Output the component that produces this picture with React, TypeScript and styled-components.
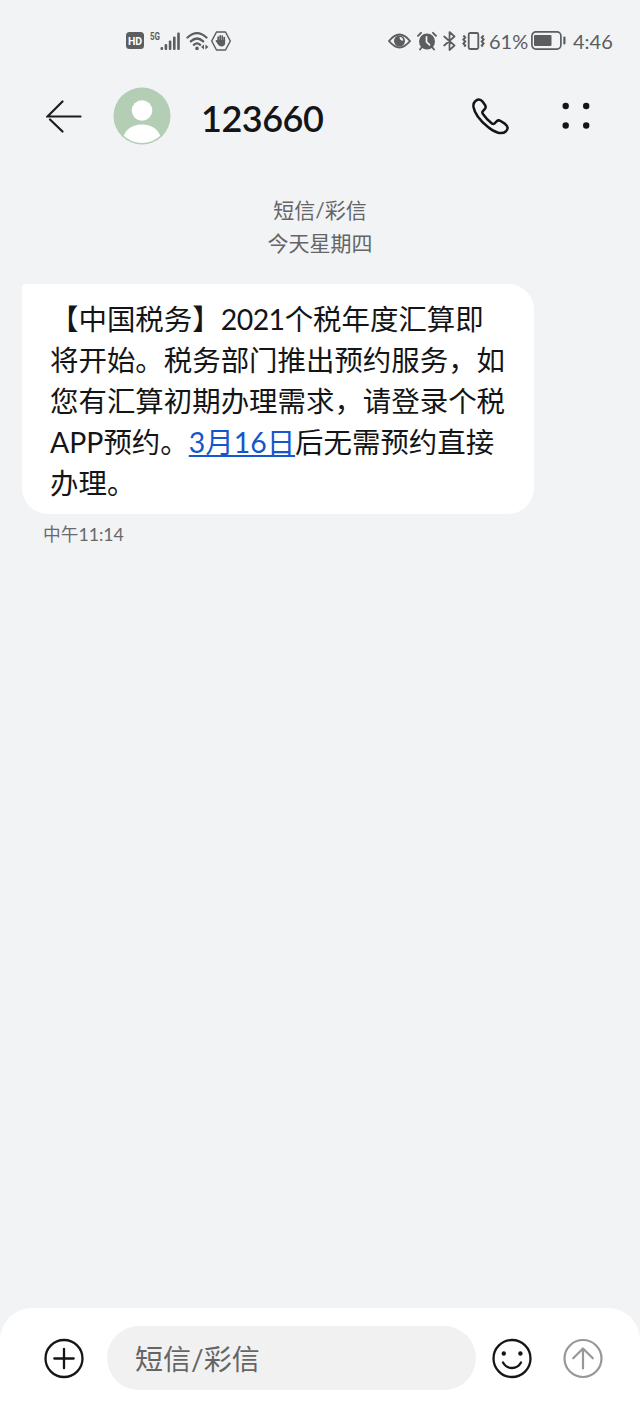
import React from "react";
import styled, { createGlobalStyle } from "styled-components";

const GlobalStyle = createGlobalStyle`
  * { box-sizing: border-box; }
  body {
    margin: 0;
    background: #f2f3f5;
    font-family: "Lato", "Noto Sans CJK SC", sans-serif;
    color: #141516;
  }
`;

const Screen = styled.div`
  width: 640px;
  height: 1408px;
  display: flex;
  flex-direction: column;
  overflow: hidden;
  background: #f2f3f5;
`;

const StatusBar = styled.div`
  height: 79px;
  padding: 2px 28px 0 126px;
  display: flex;
  align-items: center;
  justify-content: space-between;
  color: #5c5d5f;
`;

const StatusGroup = styled.div`
  display: flex;
  align-items: center;
`;

const StatusIcon = styled.svg<{ $gap?: number }>`
  display: block;
  flex: none;
  margin-right: ${(p) => p.$gap ?? 0}px;
`;

const StatusText = styled.span<{ $width: number; $gap?: number }>`
  width: ${(p) => p.$width}px;
  margin-right: ${(p) => p.$gap ?? 0}px;
  font-size: 20px;
  line-height: 24px;
  white-space: nowrap;
`;

const Header = styled.header`
  height: 74px;
  padding: 0 48px 0 46px;
  display: flex;
  align-items: center;
`;

const Icon = styled.svg`
  display: block;
  flex: none;
`;

const Avatar = styled.div`
  width: 58px;
  height: 58px;
  margin: 0 30px 0 31px;
  flex: none;
`;

const Title = styled.h1`
  margin: 3px 0 0;
  flex: 1;
  font-size: 36px;
  line-height: 44px;
  font-weight: 600;
  letter-spacing: -0.5px;
`;

const Actions = styled.div`
  display: flex;
  align-items: center;
  gap: 53px;
`;

const DateBlock = styled.div`
  margin-top: 40px;
  text-align: center;
  font-size: 21px;
  line-height: 33px;
  color: #646567;
`;

const Message = styled.section`
  margin: 25px 0 0 22px;
  width: 512px;
`;

const Bubble = styled.div`
  height: 230px;
  padding: 15px 0 0 28px;
  border-radius: 4px 26px 26px 26px;
  background: #fff;
  font-size: 28.45px;
  line-height: 41px;
`;

const Line = styled.div`
  white-space: nowrap;
`;

const Latin = styled.span`
  letter-spacing: -0.5px;
`;

const DateLink = styled.a`
  color: #1456cc;
  text-decoration: underline;
  text-decoration-thickness: 1.5px;
  text-underline-offset: 2px;
`;

const Time = styled.div`
  margin: 8px 0 0 21px;
  font-size: 17.7px;
  line-height: 26px;
  color: #69696b;
`;

const Composer = styled.footer`
  margin-top: auto;
  height: 100px;
  padding: 0 36px 0 43px;
  display: flex;
  align-items: center;
  border-radius: 32px 32px 0 0;
  background: #fff;
`;

const Field = styled.div`
  width: 369px;
  height: 64px;
  margin: 0 16px 0 23px;
  padding-left: 28px;
  border-radius: 32px;
  background: #f1f1f1;
  font-size: 28px;
  line-height: 67px;
  color: #656565;
`;

const SendGap = styled.div`
  margin-left: 30px;
`;

function LeftStatus() {
  return (
    <StatusGroup>
      <StatusIcon width="18" height="17" viewBox="0 0 18 17" $gap={6}>
        <rect width="18" height="17" rx="3.5" fill="#5c5d5f" />
        <text x="9" y="12.6" fontSize="10.5" fontWeight="700" fontFamily="Roboto, sans-serif" textAnchor="middle" fill="#fff">HD</text>
      </StatusIcon>
      <StatusIcon width="31" height="20" viewBox="0 0 31 20" $gap={5}>
        <text x="0" y="9" fontSize="10.5" fontWeight="700" textLength="10" lengthAdjust="spacingAndGlyphs" fontFamily="Roboto, sans-serif" fill="#5c5d5f">5G</text>
        <g fill="#5c5d5f">
          <rect x="10.5" y="16" width="2.6" height="3" rx="1" />
          <rect x="14.6" y="13" width="2.6" height="6" rx="1" />
          <rect x="18.8" y="9.5" width="2.6" height="9.5" rx="1" />
          <rect x="23" y="5.5" width="2.6" height="13.5" rx="1" />
          <rect x="27.2" y="1.5" width="2.6" height="17.5" rx="1" />
        </g>
      </StatusIcon>
      <StatusIcon width="23" height="20" viewBox="0 0 23 20" $gap={2}>
        <g fill="none" stroke="#5c5d5f" strokeWidth="2.2" strokeLinecap="round">
          <path d="M1.500 6.500Q11-2.200 20.500 6.500" />
          <path d="M4.800 10.400Q11 4.600 17.200 10.400" />
          <path d="M7.800 13.800Q11 11 14.200 13.800" />
        </g>
        <circle cx="11" cy="17.400" r="1.800" fill="#5c5d5f" />
        <path d="M18 13.500v5l-3-2.500zM19.400 13.500v5l3-2.500z" fill="#5c5d5f" />
      </StatusIcon>
      <StatusIcon width="20" height="20" viewBox="0 0 20 20">
        <path d="M5.500 1h9L19.300 10l-4.800 9h-9L.7 10z" fill="none" stroke="#5c5d5f" strokeWidth="1.500" strokeLinejoin="round" />
        <path d="M7.200 10V6.200M9.200 9V4.800M11.300 9V5.100M13.300 10V6.500M5.400 9.800l2.200 2.800" stroke="#5c5d5f" strokeWidth="1.700" strokeLinecap="round" fill="none" />
        <path d="M6.500 9h7.600v3.300q-.4 3.200-3.600 3.200-2.300 0-3.600-2.300z" fill="#5c5d5f" />
      </StatusIcon>
    </StatusGroup>
  );
}

function RightStatus() {
  return (
    <StatusGroup>
      <StatusIcon width="23" height="16" viewBox="0 0 23 16" $gap={6}>
        <path d="M1 8Q11.500-5 22 8 11.500 21 1 8z" fill="none" stroke="#5c5d5f" strokeWidth="1.900" />
        <circle cx="11.500" cy="8" r="5.500" fill="#5c5d5f" />
        <path d="M11.500 4.200q.2 3.300 3.600 3.500a3 3 0 0 0-3.600-3.500z" fill="#f2f3f5" />
      </StatusIcon>
      <StatusIcon width="20" height="20" viewBox="0 0 20 20" $gap={6}>
        <circle cx="10" cy="10.500" r="8" fill="#5c5d5f" />
        <path d="M1 4.800L4 1.800M19 4.800l-3-3M4.500 16.500l-1.500 2M15.500 16.500l1.500 2" stroke="#5c5d5f" strokeWidth="1.900" strokeLinecap="round" />
        <path d="M9.500 5.800v5l3 3" stroke="#f2f3f5" strokeWidth="1.700" strokeLinecap="round" fill="none" />
      </StatusIcon>
      <StatusIcon width="13" height="20" viewBox="0 0 13 20" $gap={6}>
        <path d="M1.200 5.500l10.300 9L6.500 19V1l5 4.500-10.300 9" fill="none" stroke="#5c5d5f" strokeWidth="1.700" strokeLinejoin="round" strokeLinecap="round" />
      </StatusIcon>
      <StatusIcon width="23" height="18" viewBox="0 0 23 18" $gap={4}>
        <rect x="6.700" y="1" width="9.600" height="16" rx="1.500" fill="none" stroke="#5c5d5f" strokeWidth="1.800" />
        <path d="M1.400 3.500l1.800 2-1.800 2 1.800 2-1.800 2 1.800 2-1 1.200M21.600 3.500l-1.800 2 1.800 2-1.800 2 1.800 2-1.800 2 1 1.200" fill="none" stroke="#5c5d5f" strokeWidth="2" />
      </StatusIcon>
      <StatusText $width={38} $gap={4}>61%</StatusText>
      <StatusIcon width="35" height="19" viewBox="0 0 35 19" $gap={7}>
        <rect x=".900" y=".900" width="29" height="17.200" rx="4" fill="none" stroke="#5c5d5f" strokeWidth="1.700" />
        <rect x="3" y="4" width="17.500" height="11" rx="1" fill="#5c5d5f" />
        <rect x="32.300" y="5.500" width="2.200" height="8" rx="1" fill="#5c5d5f" />
      </StatusIcon>
      <StatusText $width={39}>4:46</StatusText>
    </StatusGroup>
  );
}

export default function App() {
  return (
    <Screen>
      <GlobalStyle />
      <StatusBar>
        <LeftStatus />
        <RightStatus />
      </StatusBar>
      <Header>
        <Icon width="36" height="34" viewBox="0 0 36 34" fill="none" stroke="#1b1c1e" strokeWidth="2.200" strokeLinecap="round">
          <path d="M34.500 17.500H1.500L16.500 2.500M4 20.500l12.500 12" />
        </Icon>
        <Avatar>
          <svg width="58" height="58" viewBox="0 0 58 58">
            <clipPath id="face"><circle cx="29" cy="29" r="27" /></clipPath>
            <circle cx="29" cy="29" r="28.500" fill="#b4ceb6" />
            <circle cx="29" cy="23.500" r="10.300" fill="#fff" />
            <path clipPath="url(#face)" d="M9 58c0-13 8-20.500 20-20.500S49 45 49 58z" fill="#fff" />
          </svg>
        </Avatar>
        <Title>123660</Title>
        <Actions>
          <Icon width="37" height="37" viewBox="0 0 37 37" fill="none" stroke="#141516" strokeWidth="2.500" strokeLinejoin="round">
            <path d="M3 3.500C5.500.800 8.500 1 10.500 3.500L13 7q1.500 2.300-.3 4.200l-1.800 1.900q-1.100 1.300 0 2.800 3.800 5.400 9 9.600 1.400 1.100 2.700-.2l2-2q1.800-1.700 4-.3l4.500 2.900q4.500 3.600.9 7.300c-4 3.600-11 1.900-18.300-4.400C8 22.500 2.500 15 1.500 9Q1 5.500 3 3.500z" />
          </Icon>
          <Icon width="30" height="28" viewBox="0 0 30 28" fill="#141516">
            <circle cx="3.700" cy="4" r="3.200" />
            <circle cx="24.200" cy="4" r="3.200" />
            <circle cx="3.700" cy="23.500" r="3.200" />
            <circle cx="24.200" cy="23.500" r="3.200" />
          </Icon>
        </Actions>
      </Header>
      <DateBlock>
        <div>短信/彩信</div>
        <div>今天星期四</div>
      </DateBlock>
      <Message>
        <Bubble>
          <Line>【中国税务】<Latin>2021</Latin>个税年度汇算即</Line>
          <Line>将开始。税务部门推出预约服务，如</Line>
          <Line>您有汇算初期办理需求，请登录个税</Line>
          <Line>APP预约。<DateLink>3月16日</DateLink>后无需预约直接</Line>
          <Line>办理。</Line>
        </Bubble>
        <Time>中午11:14</Time>
      </Message>
      <Composer>
        <Icon width="41" height="41" viewBox="0 0 41 41" fill="none" stroke="#141516" strokeWidth="2.300" strokeLinecap="round">
          <circle cx="21" cy="20.500" r="18.500" />
          <path d="M21 10.800v19.400M11.300 20.500h19.400" />
        </Icon>
        <Field>短信/彩信</Field>
        <Icon width="41" height="41" viewBox="0 0 41 41" fill="none" stroke="#141516" strokeWidth="2.300" strokeLinecap="round">
          <circle cx="20" cy="20.500" r="18.500" />
          <path d="M11 24.500q3 5.500 9 5.500t9-5.500" />
          <circle cx="11.800" cy="15.500" r="2.200" fill="#141516" stroke="none" />
          <circle cx="28.400" cy="15.500" r="2.200" fill="#141516" stroke="none" />
        </Icon>
        <SendGap>
          <Icon width="41" height="41" viewBox="0 0 41 41" fill="none" stroke="#979797" strokeWidth="2.200" strokeLinecap="round" strokeLinejoin="round">
            <circle cx="20" cy="20.500" r="18.500" />
            <path d="M20 30.500V10.500M10.200 20.300l9.800-9.800 9.800 9.800" />
          </Icon>
        </SendGap>
      </Composer>
    </Screen>
  );
}
